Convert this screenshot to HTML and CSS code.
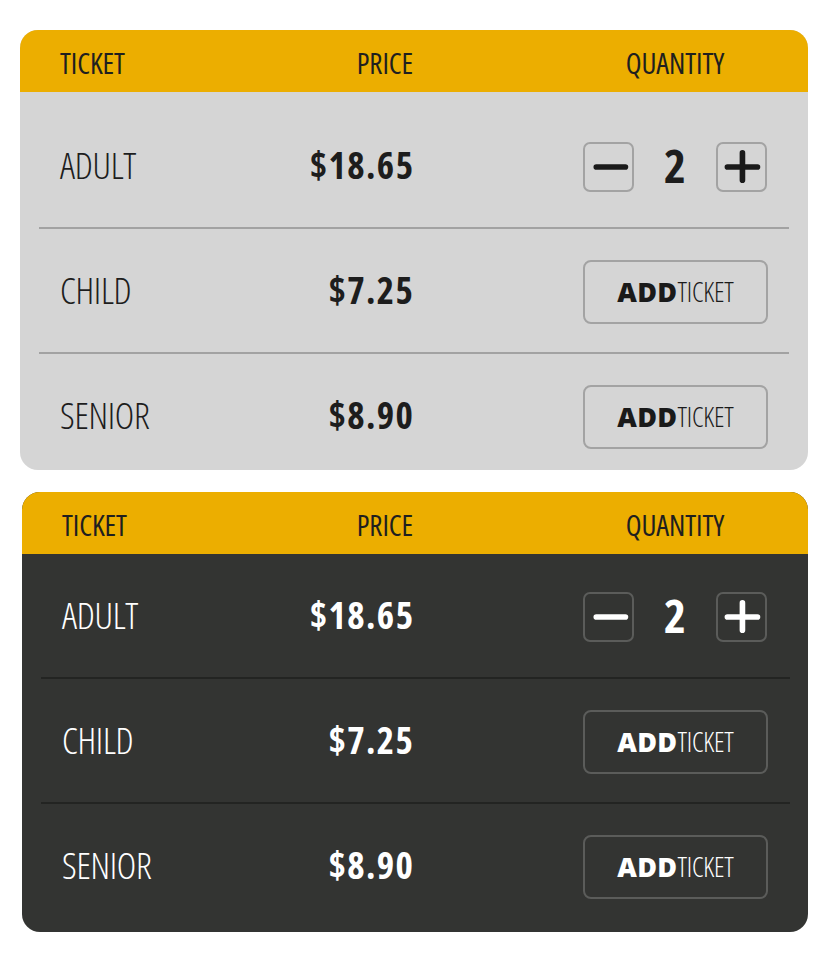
FILE: index.html
```html
<!DOCTYPE html>
<html lang="en">
<head>
<meta charset="utf-8">
<title>Tickets</title>
<link rel="stylesheet" href="styles.css">
</head>
<body>
<section class="card light offset">
  <div class="head">
    <span class="c1">TICKET</span>
    <span class="c2">PRICE</span>
    <span class="c3">QUANTITY</span>
  </div>
  <div class="body">
    <div class="row">
      <span class="name">ADULT</span>
      <span class="price">$18.65</span>
      <div class="qty">
        <button class="step" aria-label="decrease"><svg viewBox="0 0 50 50" width="50" height="50"><path d="M12 25H43"/></svg></button>
        <span class="num">2</span>
        <button class="step" aria-label="increase"><svg viewBox="0 0 50 50" width="50" height="50"><path d="M10 25H42M26 10V39"/></svg></button>
      </div>
    </div>
    <div class="row">
      <span class="name">CHILD</span>
      <span class="price">$7.25</span>
      <button class="add"><b>ADD</b>TICKET</button>
    </div>
    <div class="row">
      <span class="name">SENIOR</span>
      <span class="price">$8.90</span>
      <button class="add"><b>ADD</b>TICKET</button>
    </div>
  </div>
</section>

<section class="card dark">
  <div class="head">
    <span class="c1">TICKET</span>
    <span class="c2">PRICE</span>
    <span class="c3">QUANTITY</span>
  </div>
  <div class="body">
    <div class="row">
      <span class="name">ADULT</span>
      <span class="price">$18.65</span>
      <div class="qty">
        <button class="step" aria-label="decrease"><svg viewBox="0 0 50 50" width="50" height="50"><path d="M12 25H43"/></svg></button>
        <span class="num">2</span>
        <button class="step" aria-label="increase"><svg viewBox="0 0 50 50" width="50" height="50"><path d="M10 25H42M26 10V39"/></svg></button>
      </div>
    </div>
    <div class="row">
      <span class="name">CHILD</span>
      <span class="price">$7.25</span>
      <button class="add"><b>ADD</b>TICKET</button>
    </div>
    <div class="row">
      <span class="name">SENIOR</span>
      <span class="price">$8.90</span>
      <button class="add"><b>ADD</b>TICKET</button>
    </div>
  </div>
</section>
</body>
</html>
```
FILE: styles.css
```css
* { box-sizing: border-box; }

body {
  margin: 0;
  padding: 30px 20px 0 20px;
  background: #ffffff;
  font-family: "Open Sans", "Roboto", sans-serif;
  font-stretch: 75%;
  display: flex;
  flex-direction: column;
  gap: 22px;
}

.card {
  height: 440px;
  border-radius: 18px;
  overflow: hidden;
  display: flex;
  flex-direction: column;
}

.card.dark { margin-left: 2px; }

.light { background: #d5d5d5; color: #1d1d1d; }
.dark { background: #333432; color: #ffffff; }

.head {
  height: 62px;
  flex: none;
  background: #ecae00;
  color: #1f1f1f;
  display: grid;
  grid-template-columns: 1fr auto 184px;
  column-gap: 170px;
  align-items: center;
  padding: 2px 41px 0 40px;
  font-size: 29px;
  font-weight: 400;
  letter-spacing: -0.1px;
}

.head .c3 { text-align: center; }

.body { display: flex; flex-direction: column; }
.offset .body { padding-top: 12px; }

.row {
  height: 125px;
  flex: none;
  display: grid;
  grid-template-columns: 1fr auto 184px;
  column-gap: 170px;
  align-items: center;
  padding: 0 41px 0 40px;
  position: relative;
}

.row + .row::before {
  content: "";
  position: absolute;
  top: -2px;
  left: 19px;
  right: 19px;
  height: 2px;
}
.light .row + .row::before { background: #a2a2a2; }
.dark .row + .row::before { background: #232422; right: 18px; }

.name {
  font-size: 37px;
  font-weight: 300;
  font-stretch: 78%;
  letter-spacing: -0.3px;
  padding-bottom: 4px;
}

.price {
  font-size: 37px;
  font-weight: 700;
  font-stretch: 84%;
  letter-spacing: 1.4px;
  margin-right: -1.4px;
  padding-bottom: 4px;
}

.qty {
  display: flex;
  align-items: center;
  justify-content: space-between;
}

.step {
  width: 51px;
  height: 50px;
  padding: 0;
  border-radius: 7px;
  background: transparent;
  display: flex;
  align-items: center;
  justify-content: center;
}
.step svg { display: block; }
.step path { fill: none; stroke-width: 6; stroke-linecap: round; }

.num {
  font-size: 47px;
  font-weight: 700;
  font-stretch: 82%;
  line-height: 1;
  padding-bottom: 3px;
}

.add {
  height: 64px;
  width: 185px;
  border-radius: 8px;
  background: transparent;
  font-family: inherit;
  font-stretch: 75%;
  font-size: 27px;
  font-weight: 300;
  padding: 0;
  letter-spacing: -0.2px;
}
.add b { font-weight: 800; font-stretch: 92%; letter-spacing: 0.3px; }

.light .step, .light .add { border: 2px solid #a3a3a3; color: #1a1a1a; }
.light .step path { stroke: #1a1a1a; }
.dark .step, .dark .add { border: 2px solid #5b5c5a; color: #ffffff; }
.dark .step path { stroke: #ffffff; }
```
